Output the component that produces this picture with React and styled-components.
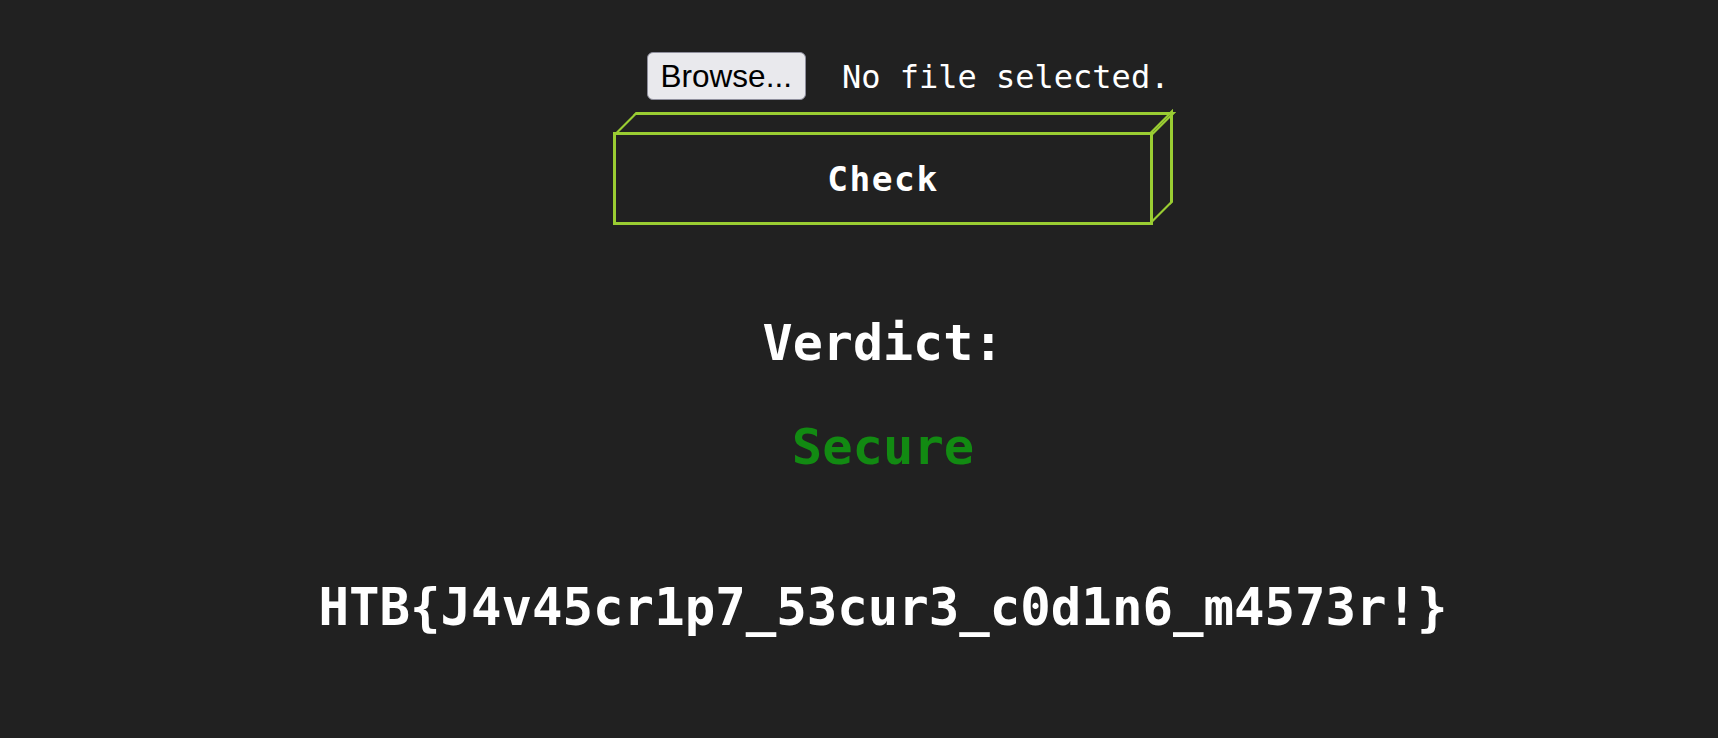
import styled, { createGlobalStyle } from "styled-components";

const GlobalStyle = createGlobalStyle`
  html, body {
    margin: 0;
    padding: 0;
    background: #212121;
  }
  body {
    font-family: "DejaVu Sans Mono", "Liberation Mono", monospace;
    color: #ffffff;
  }
`;

const App = () => {
  return (
    <Page>
      <GlobalStyle />
      <UploadForm onSubmit={(e) => e.preventDefault()}>
        <FileRow>
          <BrowseButton>
            Browse...
            <HiddenInput type="file" />
          </BrowseButton>
          <FileName>No file selected.</FileName>
        </FileRow>
        <CheckButton type="submit">Check</CheckButton>
      </UploadForm>
      <Verdict>Verdict:</Verdict>
      <Status>Secure</Status>
      <Flag>HTB{"{"}J4v45cr1p7_53cur3_c0d1n6_m4573r!{"}"}</Flag>
    </Page>
  );
};

const Page = styled.div`
  min-height: 738px;
  box-sizing: border-box;
  padding: 52px 0 0 48px;
  display: flex;
  flex-direction: column;
  align-items: center;
`;

const UploadForm = styled.form`
  display: flex;
  flex-direction: column;
  align-items: center;
`;

const FileRow = styled.div`
  display: flex;
  align-items: center;
  gap: 36px;
  margin-left: 50px;
`;

const BrowseButton = styled.label`
  box-sizing: border-box;
  height: 48px;
  padding: 0 13px;
  display: flex;
  align-items: center;
  background: #e9e9ed;
  border: 1.5px solid #8f8f9d;
  border-radius: 6px;
  color: #000000;
  font-family: "Liberation Sans", Arial, sans-serif;
  font-size: 31.5px;
  cursor: pointer;
`;

const HiddenInput = styled.input`
  display: none;
`;

const FileName = styled.span`
  font-size: 32px;
  line-height: 46px;
  padding-top: 2px;
  color: #ffffff;
`;

const CheckButton = styled.button`
  position: relative;
  box-sizing: border-box;
  width: 540px;
  height: 93px;
  margin-top: 32px;
  background: transparent;
  border: 3px solid #9acd32;
  color: #ffffff;
  font-family: "DejaVu Sans Mono", monospace;
  font-weight: bold;
  font-size: 34.5px;
  letter-spacing: 1.5px;
  cursor: pointer;

  &::before {
    content: "";
    position: absolute;
    left: -3px;
    bottom: 100%;
    box-sizing: border-box;
    width: calc(100% + 6px);
    height: 23px;
    border: 3px solid #9acd32;
    border-bottom: none;
    transform: skewX(-45deg);
    transform-origin: bottom left;
  }

  &::after {
    content: "";
    position: absolute;
    left: 100%;
    top: -3px;
    box-sizing: border-box;
    width: 23px;
    height: calc(100% + 6px);
    border: 3px solid #9acd32;
    border-left: none;
    transform: skewY(-45deg);
    transform-origin: top left;
  }
`;

const Verdict = styled.h2`
  margin: 88px 0 0;
  font-size: 50px;
  line-height: 60px;
  font-weight: bold;
  color: #ffffff;
`;

const Status = styled.div`
  margin-top: 44px;
  font-size: 50.5px;
  line-height: 60px;
  font-weight: bold;
  color: #128a12;
`;

const Flag = styled.h1`
  margin: 101px 0 0;
  font-size: 50.7px;
  line-height: 60px;
  font-weight: bold;
  color: #ffffff;
`;

export default App;
